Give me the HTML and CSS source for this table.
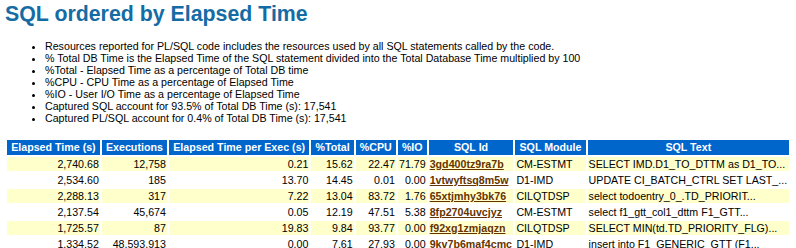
FILE: index.html
```html
<!DOCTYPE html>
<html lang="en">
<head>
  <meta charset="UTF-8" />
  <title>SQL ordered by Elapsed Time</title>
  <link rel="stylesheet" href="styles.css">
</head>
<body class="awr">
  <h3 class="awr">SQL ordered by Elapsed Time</h3>
  <ul>
    <li class="awr">Resources reported for PL/SQL code includes the resources used by all SQL statements called by the code.</li>
    <li class="awr">% Total DB Time is the Elapsed Time of the SQL statement divided into the Total Database Time multiplied by 100</li>
    <li class="awr">%Total - Elapsed Time as a percentage of Total DB time</li>
    <li class="awr">%CPU - CPU Time as a percentage of Elapsed Time</li>
    <li class="awr">%IO - User I/O Time as a percentage of Elapsed Time</li>
    <li class="awr">Captured SQL account for 93.5% of Total DB Time (s): 17,541</li>
    <li class="awr">Captured PL/SQL account for 0.4% of Total DB Time (s): 17,541</li>
  </ul>
  <table class="tdiff">
    <tr>
      <th class="awrbg">Elapsed Time (s)</th>
      <th class="awrbg">Executions</th>
      <th class="awrbg">Elapsed Time per Exec (s)</th>
      <th class="awrbg">%Total</th>
      <th class="awrbg">%CPU</th>
      <th class="awrbg">%IO</th>
      <th class="awrbg">SQL Id</th>
      <th class="awrbg">SQL Module</th>
      <th class="awrbg">SQL Text</th>
    </tr>
    <tr>
      <td class="awrc num">2,740.68</td>
      <td class="awrc num">12,758</td>
      <td class="awrc num">0.21</td>
      <td class="awrc num">15.62</td>
      <td class="awrc num">22.47</td>
      <td class="awrc num">71.79</td>
      <td class="awrc"><a class="awr" href="#3gd400tz9ra7b">3gd400tz9ra7b</a></td>
      <td class="awrc">CM-ESTMT</td>
      <td class="awrc">SELECT IMD.D1_TO_DTTM as D1_TO...</td>
    </tr>
    <tr>
      <td class="awrnc num">2,534.60</td>
      <td class="awrnc num">185</td>
      <td class="awrnc num">13.70</td>
      <td class="awrnc num">14.45</td>
      <td class="awrnc num">0.01</td>
      <td class="awrnc num">0.00</td>
      <td class="awrnc"><a class="awr" href="#1vtwyftsq8m5w">1vtwyftsq8m5w</a></td>
      <td class="awrnc">D1-IMD</td>
      <td class="awrnc">UPDATE CI_BATCH_CTRL SET LAST_...</td>
    </tr>
    <tr>
      <td class="awrc num">2,288.13</td>
      <td class="awrc num">317</td>
      <td class="awrc num">7.22</td>
      <td class="awrc num">13.04</td>
      <td class="awrc num">83.72</td>
      <td class="awrc num">1.76</td>
      <td class="awrc"><a class="awr" href="#65xtjmhy3bk76">65xtjmhy3bk76</a></td>
      <td class="awrc">CILQTDSP</td>
      <td class="awrc">select todoentry_0_.TD_PRIORIT...</td>
    </tr>
    <tr>
      <td class="awrnc num">2,137.54</td>
      <td class="awrnc num">45,674</td>
      <td class="awrnc num">0.05</td>
      <td class="awrnc num">12.19</td>
      <td class="awrnc num">47.51</td>
      <td class="awrnc num">5.38</td>
      <td class="awrnc"><a class="awr" href="#8fp2704uvcjyz">8fp2704uvcjyz</a></td>
      <td class="awrnc">CM-ESTMT</td>
      <td class="awrnc">select f1_gtt_col1_dttm F1_GTT...</td>
    </tr>
    <tr>
      <td class="awrc num">1,725.57</td>
      <td class="awrc num">87</td>
      <td class="awrc num">19.83</td>
      <td class="awrc num">9.84</td>
      <td class="awrc num">93.77</td>
      <td class="awrc num">0.00</td>
      <td class="awrc"><a class="awr" href="#f92xg1zmjaqzn">f92xg1zmjaqzn</a></td>
      <td class="awrc">CILQTDSP</td>
      <td class="awrc">SELECT MIN(td.TD_PRIORITY_FLG)...</td>
    </tr>
    <tr>
      <td class="awrnc num">1,334.52</td>
      <td class="awrnc num">48,593,913</td>
      <td class="awrnc num">0.00</td>
      <td class="awrnc num">7.61</td>
      <td class="awrnc num">27.93</td>
      <td class="awrnc num">0.00</td>
      <td class="awrnc"><a class="awr" href="#9kv7b6maf4cmc">9kv7b6maf4cmc</a></td>
      <td class="awrnc">D1-IMD</td>
      <td class="awrnc">insert into F1_GENERIC_GTT (F1...</td>
    </tr>
  </table>
</body>
</html>
```

FILE: styles.css
```css
body.awr {
  margin: 2px 5px;
  font: bold 10pt "Liberation Sans", Arial, sans-serif;
  color: black;
  background: white;
}

h3.awr {
  font: bold 16pt "Liberation Sans", Arial, sans-serif;
  color: #156ca5;
  background-color: white;
  margin-top: 0;
  margin-bottom: 0;
}

li.awr {
  font: 8pt "Liberation Sans", Arial, sans-serif;
  color: black;
  background: white;
}

table.tdiff {
  width: 100%;
  border-spacing: 2px;
}

th.awrbg {
  font: bold 8pt "Liberation Sans", Arial, sans-serif;
  color: white;
  background: #0066cc;
  padding: 1px 4px 2px 4px;
  white-space: nowrap;
}

td.awrc,
td.awrnc {
  font: 8pt "Liberation Sans", Arial, sans-serif;
  color: black;
  vertical-align: top;
  padding: 1px;
  white-space: nowrap;
}

td.awrc {
  background: #ffffcc;
}

td.awrnc {
  background: white;
}

td.num {
  text-align: right;
}

a.awr {
  font: bold 8pt "Liberation Sans", Arial, sans-serif;
  color: #663300;
  vertical-align: top;
}
```
